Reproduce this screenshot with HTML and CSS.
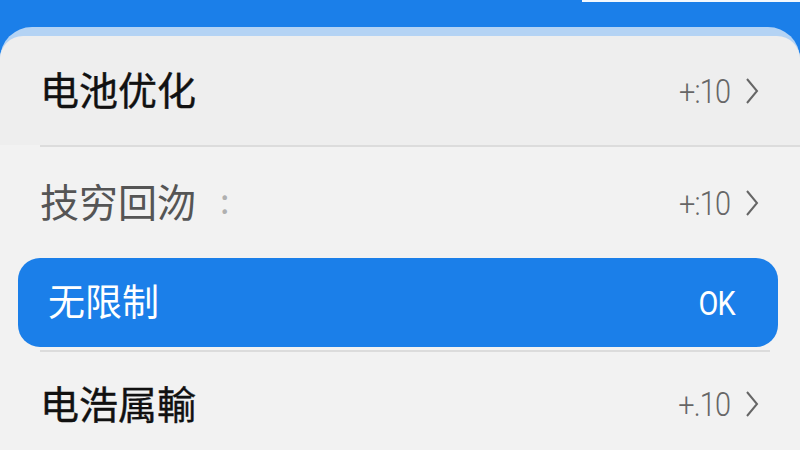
FILE: index.html
```html
<!DOCTYPE html>
<html>
<head>
    <title>电池优化</title>
    <link rel="stylesheet" href="styles.css">
</head>
<body>
    <div class="screen">
        <div class="topbar"><span class="glare"></span></div>

        <div class="sheet">
            <div class="row row-head">
                <span class="label">电池优化</span>
                <span class="value">+:10</span>
                <svg class="chevron" viewBox="0 0 16 28"><path d="M3 2 L13 14 L3 26" /></svg>
            </div>
            <div class="divider"></div>

            <div class="row row-muted">
                <span class="label">技穷回沕<span class="colon">:</span></span>
                <span class="value">+:10</span>
                <svg class="chevron" viewBox="0 0 16 28"><path d="M3 2 L13 14 L3 26" /></svg>
            </div>

            <div class="row row-active">
                <span class="label">无限制</span>
                <span class="value">OK</span>
            </div>
            <div class="divider divider-short"></div>

            <div class="row row-foot">
                <span class="label">电浩属輸</span>
                <span class="value">+.10</span>
                <svg class="chevron" viewBox="0 0 16 28"><path d="M3 2 L13 14 L3 26" /></svg>
            </div>
        </div>
    </div>
</body>
</html>
```

FILE: styles.css
```css
html, body { margin: 0; padding: 0; }
body { background: #1b7fe9; font-family: "Noto Sans CJK SC", "Noto Sans", sans-serif; }
.screen { width: 800px; height: 450px; overflow: hidden; }

.topbar { height: 27px; display: flex; justify-content: flex-end; align-items: flex-start; }
.glare { width: 218px; height: 2px; background: #f4f8fd; }

.sheet { width: 800px; height: 430px; background: #f2f2f2; border-top: 9px solid #b4d3f4; border-radius: 32px 32px 0 0; }

.row { display: flex; align-items: center; padding: 0 40px 0 40px; }
.label { flex: 1; font-size: 39px; line-height: 1; margin-top: -4px; }
.value { font-family: "Roboto", "DejaVu Sans", sans-serif; font-weight: 300; font-size: 34px; color: #666; letter-spacing: -1px; transform: scaleX(0.85); transform-origin: right center; }
.chevron { width: 16px; height: 28px; margin-left: 14px; fill: none; stroke: #666; stroke-width: 2; }

.row-head { height: 109px; background: #eeeeee; border-radius: 23px 23px 0 0; }
.row-head .label { color: #111; font-weight: 400; -webkit-text-stroke: 0.4px #111; }

.divider { height: 2px; margin-left: 40px; background: #dcdcdc; }
.divider-short { width: 730px; margin-top: 3px; }

.row-muted { height: 111px; }
.row-muted .label { color: #555; }
.colon { font-size: 34px; color: #b0b0b0; margin-left: 24px; position: relative; top: -3px; }

.row-active { height: 89px; margin: 0 22px 0 18px; padding: 0 43px 0 30px; background: #1b7fe9; border-radius: 22px; }
.row-active .label { color: #fff; font-size: 37px; }
.row-active .value { color: #fff; font-weight: 400; }

.row-foot { height: 104px; }
.row-foot .label { color: #111; font-weight: 400; -webkit-text-stroke: 0.4px #111; }
```
